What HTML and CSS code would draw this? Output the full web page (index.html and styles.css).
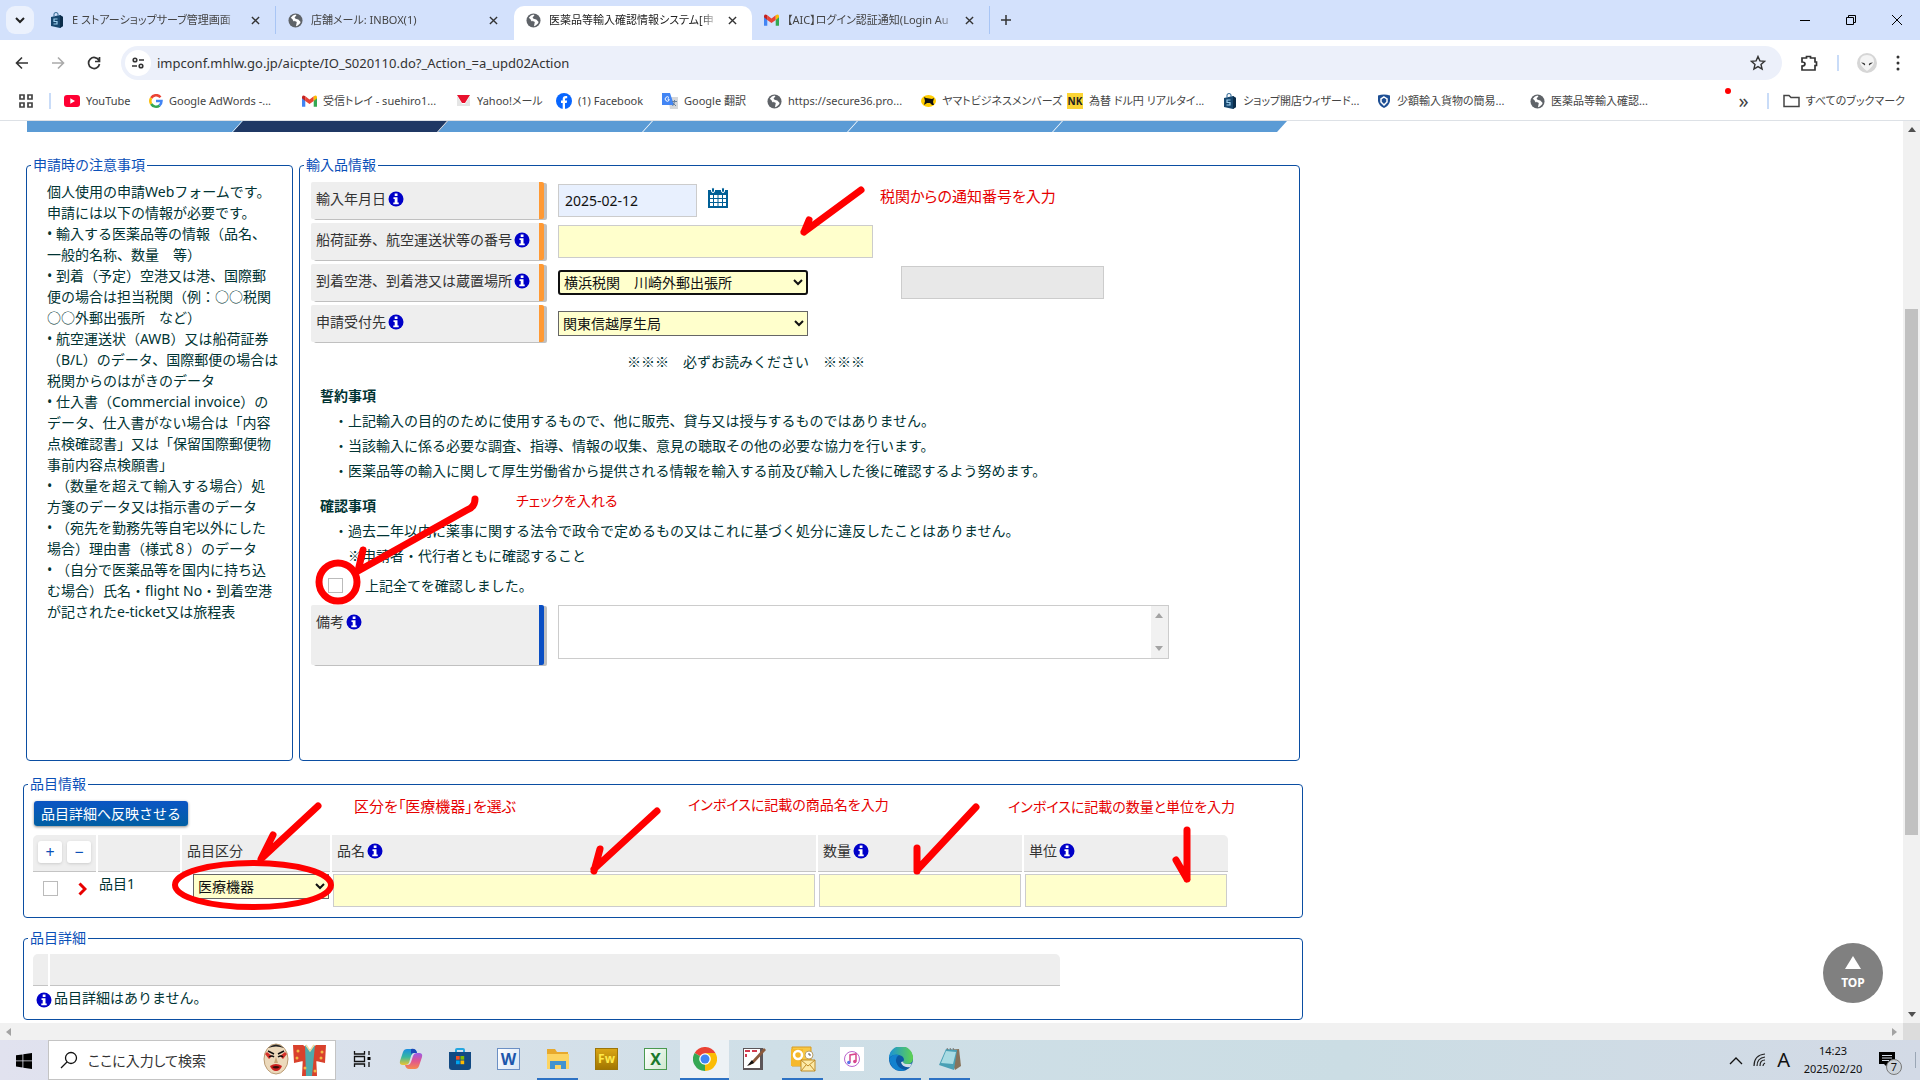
FILE: index.html
```
<!DOCTYPE html>
<html lang="ja">
<head>
  <meta charset="UTF-8">
  <meta name="viewport" content="width=device-width, initial-scale=1.0">
  <title>医薬品等輸入確認情報システム</title>
  <link rel="stylesheet" href="styles.css">
</head>
<body>

  <!-- shared icons -->
  <svg width="0" height="0" class="defs" aria-hidden="true">
    <symbol id="globe" viewBox="0 0 16 16">
      <circle cx="8" cy="8" r="7.5" fill="#5f6368"/>
      <path d="M3 5q2-3 5-3.500l1 1.500-2 1.500 1 1.500 3 1 2.500 2.500-1 2-2.500 2-1.500.5.5-2.500L8 9.500 5.500 8.500 5 7z" fill="#fff"/>
      <path d="M8 3.500l2.500.5-1.500 1.500zM6 8l3.500 1.500L8.500 12z" fill="#5f6368"/>
    </symbol>
    <symbol id="info" viewBox="0 0 16 16">
      <circle cx="8" cy="8" r="7.500" fill="#0000c8"/>
      <path d="M6.700 2.500h2.800v2.600H6.700zM5.500 6.300h4v5.200h1.200v1.700H5.300v-1.700h1.400V8H5.500z" fill="#fff"/>
    </symbol>
    <symbol id="gmail" viewBox="0 0 16 12">
      <path d="M0 1.500V12h3.500V5z" fill="#4285f4"/>
      <path d="M12.500 5v7H16V1.500z" fill="#34a853"/>
      <path d="M3.500 1v5L8 9.300 12.500 6V1L8 4.500z" fill="#ea4335"/>
      <path d="M0 1.500V3l3.500 3V1Q1-.8 0 1.500z" fill="#c5221f"/>
      <path d="M16 1.500V3l-3.500 3V1Q15-.8 16 1.500z" fill="#fbbc04"/>
    </symbol>
    <symbol id="shop" viewBox="0 0 14 16">
      <path d="M1 5l9-2 3 2v9l-3 2-9-2z" fill="#17476f"/>
      <path d="M10 3l3 2v9l-3 2z" fill="#0b2c49"/>
      <path d="M4 5V2q2-3 4 0v2" fill="none" stroke="#4b7ba2" stroke-width="1.200"/>
      <path d="M7.500 7H4v2.500h3V12H3.500" fill="none" stroke="#9fd0ee" stroke-width="1.200"/>
    </symbol>
    <symbol id="cross" viewBox="0 0 10 10">
      <path d="M1 1l8 8M9 1L1 9" stroke="#333" stroke-width="1.500"/>
    </symbol>
  </svg>

  <header class="browser">
    <div class="tabstrip">
      <button class="tab-search" aria-label="タブを検索"><svg width="10" height="10" viewBox="0 0 10 10"><path d="M1 3l4 4 4-4" fill="none" stroke="#222" stroke-width="2"/></svg></button>
      <div class="tab">
        <svg width="14" height="16"><use href="#shop"/></svg>
        <span>E ストアーショップサーブ管理画面</span>
        <button aria-label="閉じる"><svg width="9" height="9"><use href="#cross"/></svg></button>
      </div>
      <div class="tab">
        <svg width="15" height="15"><use href="#globe"/></svg>
        <span>店舗メール: INBOX(1)</span>
        <button aria-label="閉じる"><svg width="9" height="9"><use href="#cross"/></svg></button>
      </div>
      <div class="tab active">
        <svg width="15" height="15"><use href="#globe"/></svg>
        <span>医薬品等輸入確認情報システム[申</span>
        <button aria-label="閉じる"><svg width="9" height="9"><use href="#cross"/></svg></button>
      </div>
      <div class="tab">
        <svg width="15" height="12"><use href="#gmail"/></svg>
        <span>【AIC】ログイン認証通知(Login Au</span>
        <button aria-label="閉じる"><svg width="9" height="9"><use href="#cross"/></svg></button>
      </div>
      <button class="new-tab" aria-label="新しいタブ"><svg width="12" height="12" viewBox="0 0 12 12"><path d="M6 1v10M1 6h10" stroke="#333" stroke-width="1.500"/></svg></button>
      <div class="win-controls">
        <button aria-label="最小化"><svg width="12" height="12" viewBox="0 0 12 12"><path d="M1 6.500h10" stroke="#000"/></svg></button>
        <button aria-label="元に戻す"><svg width="12" height="12" viewBox="0 0 12 12"><path d="M1.500 3.500h7v7h-7zM3.500 3V1.500h7v7H9" fill="none" stroke="#000"/></svg></button>
        <button aria-label="閉じる"><svg width="12" height="12" viewBox="0 0 12 12"><path d="M1 1l10 10M11 1L1 11" stroke="#000"/></svg></button>
      </div>
    </div>

    <div class="toolbar">
      <button aria-label="戻る"><svg width="14" height="14" viewBox="0 0 14 14"><path d="M13 7H2M7 1.500L1.500 7 7 12.500" fill="none" stroke="#333" stroke-width="1.600"/></svg></button>
      <button aria-label="進む"><svg width="14" height="14" viewBox="0 0 14 14"><path d="M1 7h11M7 1.500L12.500 7 7 12.500" fill="none" stroke="#aaa" stroke-width="1.600"/></svg></button>
      <button aria-label="再読み込み"><svg width="14" height="14" viewBox="0 0 14 14"><path d="M12 4.500A5.500 5.500 0 1 0 12.500 8M12.500 1v4.500H8" fill="none" stroke="#333" stroke-width="1.700"/></svg></button>
      <div class="address">
        <span class="site-info"><svg width="14" height="14" viewBox="0 0 14 14"><g fill="none" stroke="#333" stroke-width="1.600"><circle cx="4" cy="4" r="1.800"/><path d="M8 4h5M1 10h5"/><circle cx="10" cy="10" r="1.800"/></g></svg></span>
        <input type="text" aria-label="アドレス" value="impconf.mhlw.go.jp/aicpte/IO_S020110.do?_Action_=a_upd02Action">
        <svg width="16" height="16" viewBox="0 0 16 16"><path d="M8 1.500l1.900 4.400 4.700.4-3.600 3.100 1.100 4.700L8 11.600l-4.100 2.500L5 9.400 1.400 6.300l4.700-.4z" fill="none" stroke="#333" stroke-width="1.400"/></svg>
      </div>
      <div class="toolbar-end">
        <button aria-label="拡張機能"><svg width="18" height="18" viewBox="0 0 18 18"><path d="M2 4h4.500V2.500h4V4H15v4h1.500v3.500H15V16H2v-4q3 0 3-2t-3-2z" fill="none" stroke="#333" stroke-width="1.700"/></svg></button>
        <i class="sep"></i>
        <button aria-label="プロフィール"><svg width="20" height="20" viewBox="0 0 20 20"><circle cx="10" cy="10" r="10" fill="#d6d6d6"/><path d="M3 9q0-7 7-7t7 7q0 4-7 9-7-5-7-9z" fill="#f4f4f4"/><path d="M4 9.500l4 3q1-3-4-3zM16 9.500l-4 3q-1-3 4-3z" fill="#333"/></svg></button>
        <button aria-label="メニュー"><svg width="4" height="16" viewBox="0 0 4 16"><g fill="#333"><circle cx="2" cy="2" r="1.500"/><circle cx="2" cy="8" r="1.500"/><circle cx="2" cy="14" r="1.500"/></g></svg></button>
      </div>
    </div>

    <nav class="bookmarks">
      <svg width="14" height="14" viewBox="0 0 14 14"><path d="M1 1h4v4H1zM9 1h4v4H9zM1 9h4v4H1zM9 9h4v4H9z" fill="none" stroke="#444" stroke-width="1.700"/></svg>
      <i class="sep"></i>
      <a href="#"><svg width="16" height="12" viewBox="0 0 16 12"><rect width="16" height="12" rx="3" fill="#f03"/><path d="M6.300 3.300v5.400L11 6z" fill="#fff"/></svg>YouTube</a>
      <a href="#"><svg width="14" height="14" viewBox="0 0 14 14"><g fill="none" stroke-width="2.500"><path d="M11.500 3.200A5.700 5.700 0 0 0 2.200 4" stroke="#ea4335"/><path d="M2.200 4a5.800 5.800 0 0 0 0 6" stroke="#fbbc05"/><path d="M2.200 10a5.700 5.700 0 0 0 8.400 1.500" stroke="#34a853"/><path d="M7 7h5.500q0 3-2 4.600" stroke="#4285f4"/></g></svg>Google AdWords -...</a>
      <a href="#"><svg width="15" height="12"><use href="#gmail"/></svg>受信トレイ - suehiro1...</a>
      <a href="#"><svg width="15" height="15" viewBox="0 0 15 15"><path d="M1 1h13L9 9H6z" fill="#e8112d"/><path d="M1 2v10h13V2L9 10H6z" fill="#e5e5e5"/></svg>Yahoo!メール</a>
      <a href="#"><svg width="16" height="16" viewBox="0 0 16 16"><circle cx="8" cy="8" r="8" fill="#0866ff"/><path d="M6.700 16V10H5V7.500h1.700V6q0-3 3-3h1.500v2.200H10q-1 0-1 1v1.300h2.100l-.4 2.500H9v6z" fill="#fff"/></svg>(1) Facebook</a>
      <a href="#"><svg width="16" height="16" viewBox="0 0 16 16"><path d="M6 4h10v12H8z" fill="#d5d7da"/><path d="M0 0h8l4 12H0z" fill="#4285f4"/><path d="M7 4.500a2.200 2.200 0 1 0 0 3V6H5.500" fill="none" stroke="#fff"/><path d="M10 8.500h5M12.500 7v1.500q-.5 3-2 4.500M11 10l3 3" fill="none" stroke="#67809e"/></svg>Google 翻訳</a>
      <a href="#"><svg width="15" height="15"><use href="#globe"/></svg>https://secure36.pro...</a>
      <a href="#"><svg width="15" height="12" viewBox="0 0 15 12"><ellipse cx="7.500" cy="6" rx="7.500" ry="6" fill="#fc0"/><path d="M3 2l2 1 6 1 2-1-1 4 1 3h-2L9 8 6 8l-3 2 1-4z" fill="#111"/></svg>ヤマトビジネスメンバーズ</a>
      <a href="#"><b class="nk">NK</b>為替 ドル円 リアルタイ...</a>
      <a href="#"><svg width="14" height="16"><use href="#shop"/></svg>ショップ開店ウィザード...</a>
      <a href="#"><svg width="14" height="14" viewBox="0 0 14 14"><path d="M1 1.500q6-2 12 0V7q-1 5-6 7-5-2-6-7z" fill="#1e4f94"/><path d="M7 3l3 2v3l-3 3-3-3V5z" fill="none" stroke="#fff" stroke-width="1.500"/></svg>少額輸入貨物の簡易...</a>
      <a href="#"><svg width="15" height="15"><use href="#globe"/></svg>医薬品等輸入確認...</a>
      <span class="more">»</span>
      <i class="sep"></i>
      <a href="#"><svg width="17" height="14" viewBox="0 0 17 14"><path d="M1 1.500h5l2 2h8v9H1z" fill="none" stroke="#444" stroke-width="1.500"/></svg>すべてのブックマーク</a>
      <i class="red-dot"></i>
    </nav>
  </header>

  <div class="view">
    <main class="page">
      <div class="steps"><i></i><i class="now"></i><i></i><i></i><i></i><i></i></div>

      <div class="panels">
        <fieldset class="notes">
          <legend>申請時の注意事項</legend>
          <p>個人使用の申請Webフォームです。<br>申請には以下の情報が必要です。<br>
          • 輸入する医薬品等の情報（品名、<br>一般的名称、数量　等）<br>
          • 到着（予定）空港又は港、国際郵<br>便の場合は担当税関（例：○○税関<br>○○外郵出張所　など）<br>
          • 航空運送状（AWB）又は船荷証券<br>（B/L）のデータ、国際郵便の場合は<br>税関からのはがきのデータ<br>
          • 仕入書（Commercial invoice）の<br>データ、仕入書がない場合は「内容<br>点検確認書」又は「保留国際郵便物<br>事前内容点検願書」<br>
          • （数量を超えて輸入する場合）処<br>方箋のデータ又は指示書のデータ<br>
          • （宛先を勤務先等自宅以外にした<br>場合）理由書（様式８）のデータ<br>
          • （自分で医薬品等を国内に持ち込<br>む場合）氏名・flight No・到着空港<br>が記されたe-ticket又は旅程表</p>
        </fieldset>

        <fieldset class="import">
          <legend>輸入品情報</legend>
          <div class="row">
            <label for="date">輸入年月日<svg class="info"><use href="#info"/></svg></label>
            <input type="text" id="date" class="date" value="2025-02-12">
            <svg class="calendar" width="20" height="21" viewBox="0 0 20 21"><path d="M0 3h20v18H0z" fill="#005f96"/><path d="M2 8h3v3H2zM6 8h3.500v3H6zM10.500 8H14v3h-3.500zM15 8h3v3h-3zM2 12h3v3H2zM6 12h3.500v3H6zM10.500 12H14v3h-3.500zM15 12h3v3h-3zM2 16h3v3H2zM6 16h3.500v3H6zM10.500 16H14v3h-3.500zM15 16h3v3h-3z" fill="#fff"/><rect x="3.500" y=".5" width="3" height="5" rx="1.500" fill="#005f96" stroke="#fff"/><rect x="13.500" y=".5" width="3" height="5" rx="1.500" fill="#005f96" stroke="#fff"/></svg>
          </div>
          <div class="row">
            <label for="awb">船荷証券、航空運送状等の番号<svg class="info"><use href="#info"/></svg></label>
            <input type="text" id="awb" class="awb">
          </div>
          <div class="row">
            <label for="port">到着空港、到着港又は蔵置場所<svg class="info"><use href="#info"/></svg></label>
            <select id="port" class="focused"><option>横浜税関　川崎外郵出張所</option></select>
            <input type="text" class="other" aria-label="その他の場所" disabled>
          </div>
          <div class="row">
            <label for="office">申請受付先<svg class="info"><use href="#info"/></svg></label>
            <select id="office"><option>関東信越厚生局</option></select>
          </div>

          <p class="must-read">※※※　必ずお読みください　※※※</p>
          <div class="terms">
            <h2>誓約事項</h2>
            <p>・上記輸入の目的のために使用するもので、他に販売、貸与又は授与するものではありません。</p>
            <p>・当該輸入に係る必要な調査、指導、情報の収集、意見の聴取その他の必要な協力を行います。</p>
            <p>・医薬品等の輸入に関して厚生労働省から提供される情報を輸入する前及び輸入した後に確認するよう努めます。</p>
            <h2>確認事項</h2>
            <p>・過去二年以内に薬事に関する法令で政令で定めるもの又はこれに基づく処分に違反したことはありません。</p>
            <p>　※申請者・代行者ともに確認すること</p>
            <label class="agree"><input type="checkbox">上記全てを確認しました。</label>
          </div>

          <div class="row remark">
            <label for="remark">備考<svg class="info"><use href="#info"/></svg></label>
            <div class="textbox">
              <textarea id="remark"></textarea>
              <span class="bar"><i class="up"></i><i class="down"></i></span>
            </div>
          </div>
        </fieldset>
      </div>

      <fieldset class="items">
        <legend>品目情報</legend>
        <button class="apply">品目詳細へ反映させる</button>
        <table>
          <thead>
            <tr>
              <th class="c-tools"><button class="pm">+</button><button class="pm">−</button></th>
              <th class="c-no"></th>
              <th class="c-kind">品目区分</th>
              <th class="c-name">品名<svg class="info"><use href="#info"/></svg></th>
              <th class="c-num">数量<svg class="info"><use href="#info"/></svg></th>
              <th class="c-num">単位<svg class="info"><use href="#info"/></svg></th>
            </tr>
          </thead>
          <tbody>
            <tr>
              <td><span class="pick"><input type="checkbox" aria-label="品目1を選択"><svg width="9" height="14" viewBox="0 0 9 14"><path d="M1.500 1.500L7 7l-5.500 5.500" fill="none" stroke="#e80000" stroke-width="3"/></svg></span></td>
              <td>品目1</td>
              <td><select class="kind" aria-label="品目区分"><option>医療機器</option></select></td>
              <td><input type="text" aria-label="品名"></td>
              <td><input type="text" aria-label="数量"></td>
              <td><input type="text" aria-label="単位"></td>
            </tr>
          </tbody>
        </table>
      </fieldset>

      <fieldset class="details">
        <legend>品目詳細</legend>
        <table><tr><th class="d-first"></th><th class="d-rest"></th></tr></table>
        <p><svg class="info"><use href="#info"/></svg>品目詳細はありません。</p>
      </fieldset>

      <!-- hand drawn notes over the form -->
      <svg class="ink" viewBox="0 0 1300 900" width="1300" height="900">
        <g fill="none" stroke="#f00" stroke-width="7" stroke-linecap="round" stroke-linejoin="round">
          <path d="M861 69L804 111M809 99L804 111"/>
          <path d="M475 378Q475 386 467 389L358 450L363 429"/>
          <ellipse cx="338" cy="461" rx="19" ry="19"/>
          <path d="M318 685L262 737M273 714L261 738"/>
          <ellipse cx="253" cy="764" rx="78" ry="22" stroke-width="6"/>
          <path d="M657 690L594 748M600 728L594 750"/>
          <path d="M976 686L918 748M917 727V750"/>
          <path d="M1187 709V758M1176 739L1187 758"/>
        </g>
      </svg>
      <span class="memo memo-number">税関からの通知番号を入力</span>
      <span class="memo memo-check">チェックを入れる</span>
      <span class="memo memo-kind">区分を「医療機器」を選ぶ</span>
      <span class="memo memo-name">インボイスに記載の商品名を入力</span>
      <span class="memo memo-count">インボイスに記載の数量と単位を入力</span>
    </main>

    <a href="#" class="to-top"><i></i>TOP</a>
    <div class="vscroll"><i class="up"></i><i class="thumb"></i><i class="down"></i></div>
    <div class="hscroll"><i class="left"></i><i class="right"></i></div>
    <div class="corner"></div>
  </div>

  <footer class="taskbar">
    <button class="start" aria-label="スタート"><svg width="16" height="16" viewBox="0 0 16 16"><path d="M0 2.300L6.500 1.400v6.100H0zM7.300 1.300L16 0v7.500H7.300zM0 8.300h6.500v6.200L0 13.600zM7.300 8.300H16V16l-8.700-1.300z"/></svg></button>
    <label class="search">
      <svg width="18" height="18" viewBox="0 0 18 18"><circle cx="11" cy="7" r="5.500" fill="none" stroke="#111" stroke-width="1.300"/><path d="M7 11l-6 6" stroke="#111" stroke-width="1.300"/></svg>
      <input type="text" placeholder="ここに入力して検索">
      <svg width="64" height="34" viewBox="0 0 64 34">
        <ellipse cx="13" cy="16" rx="12" ry="15" fill="#ecd9bb" stroke="#b99a72"/>
        <path d="M5 5q8-7 16 0-8-3-16 0z" fill="#222"/>
        <path d="M2 11l2-2 5 4-3 3zM24 11l-2-2-5 4 3 3z" fill="#d4322b"/>
        <path d="M5 8l6 3M21 8l-6 3M6 14q3-2 5 0M15 14q3-2 5 0" stroke="#111" stroke-width="1.500" fill="none"/>
        <path d="M13 14l-2 6h4z" fill="#c9a77a"/><path d="M7 23q6-4 12 0-2 5-6 5t-6-5z" fill="#cb1f1f"/><path d="M9 24q4-2 8 0-4 3-8 0z" fill="#350a0a"/>
        <path d="M30 2h10l7 5 6-5h10l-1 18-9-2v-6l1 21H39l1-21v6l-9 2z" fill="#d9412c"/>
        <path d="M42 2l5 5 5-5-3 31h-6z" fill="#4fa9ad"/><path d="M43 2l4 6 4-6" stroke="#f2d9a0" fill="none" stroke-width="1.500"/>
        <g fill="#f3b944"><circle cx="35" cy="8" r="1.500"/><circle cx="34" cy="15" r="1.500"/><circle cx="59" cy="9" r="1.500"/><circle cx="58" cy="15" r="1.500"/><circle cx="42" cy="25" r="1.500"/><circle cx="52" cy="28" r="1.500"/></g>
      </svg>
    </label>
    <div class="apps">
      <span><svg width="18" height="18" viewBox="0 0 18 18"><path d="M1.500 1v3h10V1M1.500 17v-3h10v3M1.500 6.500h10v5h-10zM16 1v4M16 12v5" fill="none" stroke="#111" stroke-width="1.300"/><path d="M14.500 7h3v3h-3z"/></svg></span>
      <span><svg width="24" height="24" viewBox="0 0 24 24"><defs><linearGradient id="cpa" x1="0" y1="0" x2="0" y2="1"><stop offset="0" stop-color="#1b8ee0"/><stop offset=".5" stop-color="#36b8a0"/><stop offset="1" stop-color="#f0c330"/></linearGradient><linearGradient id="cpb" x1="0" y1="0" x2="0" y2="1"><stop offset="0" stop-color="#9a5be8"/><stop offset=".5" stop-color="#e0568f"/><stop offset="1" stop-color="#f78a4d"/></linearGradient></defs><path d="M8 2h6q3 0 4 4h-3q-2 0-3 3l-2 7q-1 2-4 2H4q-4 0-3-4l3-9q1-3 4-3z" fill="url(#cpa)"/><path d="M18 6h2q4 0 3 4l-3 9q-1 3-4 3h-6q-3 0-4-4h3q2 0 3-3l2-6q1-3 4-3z" fill="url(#cpb)"/><path d="M12 2q5-1 6 4h-4q-2 0-2 2z" fill="#1a49b8"/></svg></span>
      <span><svg width="24" height="24" viewBox="0 0 24 24"><path d="M8 6V3q0-1 1-1h6q1 0 1 1v3" fill="none" stroke="#25a6e0" stroke-width="2"/><path d="M1 5h22v15q0 3-3 3H4q-3 0-3-3z" fill="#124a83"/><path d="M8 9h3.700v3.700H8z" fill="#f25022"/><path d="M12.500 9h3.700v3.700h-3.700z" fill="#7fba00"/><path d="M8 13.500h3.700v3.700H8z" fill="#00a4ef"/><path d="M12.500 13.500h3.700v3.700h-3.700z" fill="#ffb900"/></svg></span>
      <span><b class="office word">W</b></span>
      <span class="open"><svg width="24" height="22" viewBox="0 0 24 22"><path d="M1 1h8l2 3h11v16H1z" fill="#e7a92d"/><path d="M1 6h22v15H1z" fill="#fcd462"/><path d="M4 21v-8h16v8h-5v-4H9v4z" fill="#4293cf"/></svg></span>
      <span><b class="office fw">Fw</b></span>
      <span><b class="office excel">X</b></span>
      <span class="open current"><svg width="24" height="24" viewBox="0 0 24 24"><path d="M12 12L1.600 6A12 12 0 0 1 22.400 6z" fill="#ea4335"/><path d="M12 12L22.400 6A12 12 0 0 1 12 24z" fill="#fbbc05"/><path d="M12 12V24A12 12 0 0 1 1.600 6z" fill="#34a853"/><path d="M12 6h10.400L17 15l-5 9 2-8z" fill="#fbbc05"/><circle cx="12" cy="12" r="5.800" fill="#fff"/><circle cx="12" cy="12" r="4.500" fill="#4285f4"/></svg></span>
      <span><svg width="24" height="24" viewBox="0 0 24 24"><path d="M1 1h20v22H1z" fill="#5c5558"/><path d="M2 2h16v19H2z" fill="#fff"/><path d="M3 3h5v2H3zM3 7h2v3H3zM10 3h5v2h-5z" fill="#d33b4e"/><path d="M22 1L10 14l-4 5 6-3L24 3z" fill="#8b5a3c"/><path d="M10 13l-5 6 7-3z" fill="#111"/></svg></span>
      <span class="open"><svg width="26" height="26" viewBox="0 0 26 26"><path d="M2 1h19v19H2z" fill="#f8c843" stroke="#d89b22"/><path d="M1 3h12v17H1z" fill="#f5b82c"/><circle cx="8" cy="9" r="4" fill="none" stroke="#fff" stroke-width="2.500"/><circle cx="19" cy="9" r="4" fill="#fff" stroke="#b9a067"/><path d="M19 7v2h2" fill="none" stroke="#555"/><path d="M11 14h14v11H11z" fill="#fdeaa8" stroke="#c08d28"/><path d="M11 14l7 6 7-6M11 25l5-6M25 25l-5-6" fill="none" stroke="#c08d28"/></svg></span>
      <span><svg width="24" height="24" viewBox="0 0 24 24"><path d="M0 0h24v24H0z" fill="#fff"/><circle cx="12" cy="12" r="7.500" fill="none" stroke="#ba65cf"/><path d="M10 15.500V8l6-1v7.500" fill="none" stroke="#d8468c" stroke-width="1.500"/><circle cx="8.800" cy="15.500" r="1.700" fill="#5b72e8"/><circle cx="14.800" cy="14.500" r="1.700" fill="#d8468c"/></svg></span>
      <span class="open"><svg width="24" height="24" viewBox="0 0 24 24"><defs><linearGradient id="eg" x1="0" y1="0" x2="1" y2="0"><stop offset="0" stop-color="#1b91d8"/><stop offset="1" stop-color="#5fd34f"/></linearGradient></defs><circle cx="12" cy="12" r="12" fill="#0c59a4"/><path d="M0 11A12 12 0 0 1 24 11q0 6-6 6-4 0-4-2l1-2q0-4-5-5Q4 7 0 11z" fill="url(#eg)"/><path d="M0 12Q4 6 10 8q-5 3-2 9 2 5 9 6Q3 27 0 12z" fill="#1382cf"/><path d="M10 9q-4 7 3 10 5 1 9-2-1 3-3 5-9 1-11-6-1-4 2-7z" fill="#0c59a4"/><path d="M14 15q1 3 9 1.500l-2 3.500q-8 1-9-5 3-1 2 0z" fill="#d2dfe8"/></svg></span>
      <span class="open"><svg width="24" height="24" viewBox="0 0 24 24"><path d="M8 3l13-1 2 17-6 4z" fill="#87735b"/><path d="M8 2l11 1-3 20-15-5z" fill="#4aa0b5"/><path d="M8 4l10 1-3 12-12-1z" fill="#a9dbe3"/><path d="M9 1l1 2M12 1l1 2M15 1l1 2" stroke="#777"/></svg></span>
    </div>
    <div class="tray">
      <svg width="14" height="9" viewBox="0 0 14 9"><path d="M1 8l6-6 6 6" fill="none" stroke="#111" stroke-width="1.300"/></svg>
      <svg width="14" height="14" viewBox="0 0 14 14"><g fill="none" stroke="#222" stroke-width="1.200"><path d="M1 13Q1 2 12 1M4 13Q4 5 12 4M7 13q0-6 5-6M10 13q0-2 2-3"/></g></svg>
      <span class="ime">A</span>
      <time>14:23<br>2025/02/20</time>
      <span class="bell"><svg width="16" height="16" viewBox="0 0 16 16"><path d="M0 0h16v12H9v4l-4-4H0z"/><path d="M3 3.500h10M3 6h10M3 8.500h7" stroke="#d2dae6"/></svg><em>7</em></span>
    </div>
  </footer>

</body>
</html>
```
FILE: styles.css
```
* {
  box-sizing: border-box;
}

body {
  margin: 0;
  height: 100vh;
  display: flex;
  flex-direction: column;
  overflow: hidden;
  background: #fff;
  color: #003333;
  font-family: "Noto Sans", "Noto Sans CJK JP", sans-serif;
  font-size: 14px;
  line-height: 20px;
}

.defs {
  position: absolute;
}

p, h2 {
  margin: 0;
}

button, input, select, textarea {
  font: inherit;
  color: inherit;
}

svg {
  flex: none;
}

/* Browser frame */
.browser {
  flex: none;
  color: #444;
  font-size: 11px;
  font-feature-settings: "palt";
  border-bottom: 1px solid #dde1e6;
}

.browser button {
  border: none;
  background: none;
  padding: 0;
  display: flex;
  align-items: center;
  justify-content: center;
}

.tabstrip {
  height: 40px;
  display: flex;
  align-items: center;
  padding-left: 6px;
  background: #d3e1fc;
}

.browser .tab-search {
  width: 28px;
  height: 28px;
  margin-right: 4px;
  border-radius: 9px;
  background: #ebf1fd;
}

.tab {
  width: 238px;
  height: 28px;
  display: flex;
  align-items: center;
  gap: 8px;
  padding: 0 15px 0 12px;
  border-right: 1px solid #a8c5f5;
}

.tab span {
  flex: 1;
  overflow: hidden;
  white-space: nowrap;
  mask-image: linear-gradient(to right, #000 88%, transparent);
}

.tab.active {
  height: 34px;
  align-self: flex-end;
  padding-bottom: 6px;
  background: #fff;
  color: #222;
  border: none;
  border-radius: 10px 10px 0 0;
}

.tab:has(+ .active) {
  border-color: transparent;
}

.browser .new-tab {
  width: 32px;
  height: 28px;
}

.win-controls {
  margin-left: auto;
  display: flex;
}

.win-controls button {
  width: 46px;
  height: 30px;
}

.toolbar {
  height: 42px;
  display: flex;
  align-items: center;
  padding: 4px 0 0 4px;
}

.toolbar > button {
  width: 36px;
  height: 34px;
}

.address {
  flex: 1;
  height: 34px;
  margin-left: 9px;
  display: flex;
  align-items: center;
  padding: 0 16px 0 4px;
  border-radius: 17px;
  background: #ecf0fa;
}

.site-info {
  width: 26px;
  height: 26px;
  display: flex;
  align-items: center;
  justify-content: center;
  border-radius: 50%;
  background: #fff;
}

.address input[type="text"] {
  flex: 1;
  border: none;
  background: none;
  font-size: 13px;
  color: #333;
}

.toolbar-end {
  width: 138px;
  display: flex;
  align-items: center;
  justify-content: space-between;
  padding: 0 20px 0 18px;
}

.sep {
  width: 2px;
  height: 16px;
  background: #c9dcf8;
}

.bookmarks {
  position: relative;
  height: 38px;
  display: grid;
  grid-template-columns: 30px 15px 85px 153px 154px 100px 106px 105px 154px 146px 156px 154px 153px 1fr 28px 16px auto;
  align-items: center;
  padding: 0 15px 0 19px;
  white-space: nowrap;
}

.bookmarks a {
  display: flex;
  align-items: center;
  gap: 6px;
  color: #444;
  text-decoration: none;
}

.nk {
  width: 16px;
  line-height: 16px;
  background: #fcd535;
  color: #222;
  font-size: 10px;
  text-align: center;
}

.more {
  justify-self: end;
  padding-right: 18px;
  font-size: 20px;
}

.red-dot {
  position: absolute;
  top: 6px;
  right: 189px;
  width: 6px;
  height: 6px;
  border-radius: 50%;
  background: #f00;
}

/* Scrolled page */
.view {
  position: relative;
  flex: 1;
  min-height: 0;
  display: grid;
  grid-template-columns: 1fr 17px;
  grid-template-rows: 1fr 17px;
}

.page {
  position: relative;
  min-height: 0;
  overflow: hidden;
  padding-left: 23px;
}

.steps {
  display: flex;
  height: 11px;
  max-width: 1260px;
  margin-left: 4px;
  background: #5b9bd5;
  clip-path: polygon(0 0, 100% 0, calc(100% - 10px) 100%, 0 100%);
}

.steps i {
  flex: 0 1 205px;
  border-right: 1px solid #fff;
  transform: skewX(-42deg);
}

.steps i:first-child {
  flex-basis: 211px;
}

.steps i:last-child {
  flex: 1;
  border: none;
}

.steps .now {
  background: #1f3864;
}

fieldset {
  margin: 0;
  padding: 0;
  min-width: 0;
  border: 1px solid #0b4ea2;
  border-radius: 4px;
}

legend {
  margin-left: 4px;
  padding: 0 2px;
  color: #0b50b8;
}

.panels {
  display: flex;
  gap: 6px;
  max-width: 1274px;
  margin: 23px 0 0 3px;
  min-height: 606px;
}

.notes {
  flex: 0 0 267px;
}

.notes p {
  padding: 6px 0 0 20px;
  line-height: 21px;
  white-space: nowrap;
}

.import {
  flex: 1;
}

.import .row:first-of-type {
  margin-top: 7px;
}

.info {
  width: 16px;
  height: 16px;
  margin-left: 2px;
  vertical-align: -3px;
}

.row {
  display: flex;
  align-items: center;
  min-height: 37px;
  margin: 0 0 4px 11px;
}

.row > label {
  align-self: stretch;
  width: 233px;
  margin-right: 14px;
  padding: 7px 0 0 5px;
  background: #eee;
  color: #333;
  border-right: 5px solid #ff9933;
  border-radius: 2px;
  box-shadow: 3px 1px 0 #c0c0c0;
  white-space: nowrap;
}

input[type="text"] {
  height: 33px;
  padding: 0 6px;
  border: 1px solid #ccc;
  background: #ffffcc;
  color: #111;
}

input.date {
  width: 139px;
  background: #e8f0fe;
}

.calendar {
  align-self: flex-start;
  margin: 5px 0 0 11px;
}

.awb {
  width: 315px;
}

input.other {
  width: 203px;
  margin-left: 93px;
  background: #e8e8e8;
}

select {
  width: 250px;
  height: 25px;
  padding: 0;
  border: 1px solid #666;
  border-radius: 0;
  background-color: #ffffcc;
  color: #111;
}

select.focused {
  border: 2px solid #101010;
  border-radius: 3px;
}

.must-read, .terms {
  font-family: "Noto Sans CJK JP", sans-serif;
}

.must-read {
  margin: 9px 0 12px 327px;
}

.terms {
  margin-left: 20px;
  line-height: 25px;
}

.terms h2 {
  font-size: 14px;
  line-height: 25px;
}

.terms h2 ~ h2 {
  margin-top: 10px;
}

.terms p {
  margin-left: 14px;
  white-space: nowrap;
}

.agree {
  display: flex;
  align-items: center;
  gap: 22px;
  margin: 5px 0 7px 8px;
}

input[type="checkbox"] {
  appearance: none;
  width: 15px;
  height: 15px;
  margin: 0;
  border: 1px solid #bbb;
  background: #fff;
}

.remark {
  align-items: flex-start;
  min-height: 60px;
}

.remark > label {
  min-height: 60px;
  border-right-color: #0a4fc4;
}

.textbox {
  display: flex;
  width: 611px;
  height: 54px;
  border: 1px solid #ccc;
}

.textbox textarea {
  flex: 1;
  border: none;
  resize: none;
  overflow: hidden;
}

.bar {
  width: 17px;
  padding: 7px 4px;
  display: flex;
  flex-direction: column;
  justify-content: space-between;
  background: #f1f1f1;
}

.up, .down {
  border: 4px solid transparent;
  width: 8px;
}

.up {
  border-top: none;
  border-bottom: 5px solid #a3a3a3;
}

.down {
  border-bottom: none;
  border-top: 5px solid #a3a3a3;
}

/* Item tables */
.items, .details {
  max-width: 1280px;
}

.items {
  margin-top: 13px;
  padding-bottom: 8px;
}

.apply {
  display: block;
  height: 25px;
  margin: 7px 0 7px 10px;
  padding: 0 7px;
  border: none;
  border-radius: 3px;
  background: linear-gradient(#0b55c4, #005fa3);
  box-shadow: 0 1px 3px #888;
  color: #fff;
}

table {
  margin-left: 7px;
  border-spacing: 2px;
}

th, td {
  padding: 0 1px;
  text-align: left;
  font-weight: normal;
  vertical-align: top;
}

th {
  height: 37px;
  padding: 6px 5px 0;
  background: #eee;
  border-bottom: 1px solid #c4c4c4;
  color: #333;
}

th:first-child {
  border-top-left-radius: 5px;
}

th:last-child {
  border-top-right-radius: 5px;
}

.c-tools {
  width: 63px;
  white-space: nowrap;
}

.c-no {
  width: 82px;
}

.c-kind {
  width: 148px;
}

.c-name {
  width: 484px;
}

.c-num {
  width: 204px;
}

.pm {
  width: 24px;
  height: 22px;
  padding: 0;
  border: none;
  border-radius: 3px;
  background: #fff;
  box-shadow: 0 1px 3px #ccc;
  color: #0b50b8;
  font-size: 16px;
  line-height: 20px;
}

.pm + .pm {
  margin-left: 5px;
}

td input[type="text"] {
  display: block;
  width: 100%;
}

.pick {
  display: flex;
  align-items: center;
  gap: 20px;
  padding: 7px 0 0 9px;
}

.kind {
  width: 136px;
  margin-left: 10px;
}

.details {
  margin-top: 10px;
  padding-bottom: 11px;
}

.details table {
  margin-top: 4px;
}

.details th {
  height: 32px;
}

.d-first {
  width: 15px;
}

.d-rest {
  width: 1010px;
}

.details p {
  margin-left: 10px;
}

.details .info {
  vertical-align: -5px;
  margin-right: 2px;
}

/* Red pen */
.ink {
  position: absolute;
  top: 0;
  left: 0;
}

.memo {
  position: absolute;
  color: #e60000;
  font-family: "Liberation Serif", "Noto Sans CJK JP", serif;
  font-feature-settings: "palt";
  white-space: nowrap;
}

.memo-number {
  top: 66px;
  left: 880px;
  font-size: 15px;
}

.memo-check {
  top: 371px;
  left: 516px;
}

.memo-kind {
  top: 676px;
  left: 354px;
  font-size: 15px;
}

.memo-name {
  top: 675px;
  left: 688px;
}

.memo-count {
  top: 677px;
  left: 1008px;
}

.to-top {
  position: absolute;
  right: 37px;
  bottom: 37px;
  width: 60px;
  height: 60px;
  display: flex;
  flex-direction: column;
  align-items: center;
  padding-top: 13px;
  border-radius: 50%;
  background: #808080;
  color: #fff;
  font-size: 12px;
  font-weight: bold;
  text-decoration: none;
  line-height: 28px;
}

.to-top i {
  border: 8px solid transparent;
  border-top: none;
  border-bottom: 13px solid #fff;
}

/* Scroll bars */
.vscroll {
  display: flex;
  flex-direction: column;
  align-items: center;
  justify-content: space-between;
  padding: 6px 0;
  background: #f1f1f1;
}

.vscroll .up {
  border-bottom-color: #505050;
}

.vscroll .down {
  border-top-color: #505050;
}

.vscroll .thumb {
  width: 13px;
  height: 59%;
  background: #c1c1c1;
}

.hscroll {
  display: flex;
  align-items: center;
  justify-content: space-between;
  padding: 0 6px;
  background: #f1f1f1;
}

.left, .right {
  border: 4px solid transparent;
}

.left {
  border-left: none;
  border-right: 5px solid #a3a3a3;
}

.right {
  border-right: none;
  border-left: 5px solid #a3a3a3;
}

.corner {
  background: #dcdcdc;
}

/* Windows taskbar */
.taskbar {
  flex: none;
  height: 40px;
  display: flex;
  background: linear-gradient(to right, #e1e2ef, #cfdfe7 40%, #cbdde4 70%, #d3dae6);
  color: #111;
}

.start {
  width: 48px;
  border: none;
  background: none;
  padding: 0;
}

.start svg {
  vertical-align: middle;
}

.search {
  width: 288px;
  display: flex;
  align-items: center;
  padding: 0 8px 0 11px;
  border: 1px solid #c4c4c4;
  background: #fff;
}

.search input[type="text"] {
  flex: 1;
  min-width: 0;
  padding: 0 10px;
  border: none;
  background: none;
  font-feature-settings: "palt";
}

.search input::placeholder {
  color: #333;
}

.apps {
  display: flex;
  margin-left: 1px;
}

.apps span {
  width: 41px;
  margin: 0 4px;
  display: flex;
  align-items: center;
  justify-content: center;
  border-bottom: 2px solid transparent;
}

.apps .open {
  border-color: #2d72c4;
}

.apps .current {
  width: 49px;
  margin: 0;
  background: #edf2f5;
}

.office {
  width: 23px;
  height: 22px;
  border: 1px solid #6b8fc4;
  background: linear-gradient(120deg, #fff, #d8e5f5);
  color: #1d57ac;
  font-size: 16px;
  text-align: center;
}

.fw {
  border-color: #9c7508;
  background: linear-gradient(#d9a514, #a27600);
  color: #ffe94a;
  font-size: 12px;
}

.excel {
  border-color: #4a9a50;
  background: linear-gradient(120deg, #fff, #cfe8cf);
  color: #1b7a2b;
}

.tray {
  margin-left: auto;
  display: flex;
  align-items: center;
  gap: 10px;
  padding-right: 4px;
}

.ime {
  font-size: 20px;
}

time {
  width: 66px;
  font-size: 11px;
  line-height: 18px;
  text-align: center;
}

.bell {
  position: relative;
  height: 16px;
  margin-left: 3px;
  padding-right: 20px;
  border-right: 1px solid #9aa6b5;
}

.bell em {
  position: absolute;
  left: 7px;
  top: 7px;
  width: 16px;
  line-height: 14px;
  border: 1px solid #777;
  border-radius: 50%;
  background: #ccd3da;
  font-size: 11px;
  font-style: normal;
  text-align: center;
}
```
